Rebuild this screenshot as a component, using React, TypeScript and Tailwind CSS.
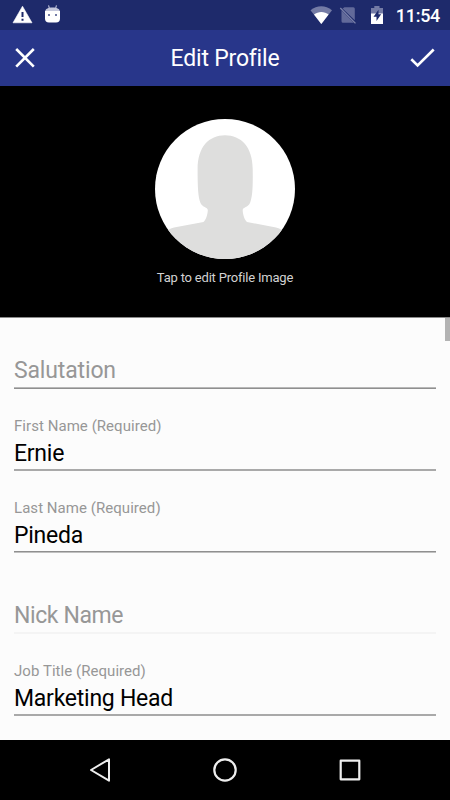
import React from 'react';

interface Field {
  label: string;
  value?: string;
  height: string;
  tracking: string;
  line: string;
}

const fields: Field[] = [
  { label: 'Salutation', height: 'h-[71px]', tracking: 'tracking-[-0.15px]', line: 'border-t-[#b8b8b8] border-b-[#8f8f8f]' },
  { label: 'First Name (Required)', value: 'Ernie', height: 'h-[82px]', tracking: 'tracking-[-0.25px]', line: 'border-t-[#a9a9a9] border-b-[#a9a9a9]' },
  { label: 'Last Name (Required)', value: 'Pineda', height: 'h-[82px]', tracking: 'tracking-[-0.25px]', line: 'border-t-[#8f8f8f] border-b-[#c0c0c0]' },
  { label: 'Nick Name', height: 'h-[81px]', tracking: 'tracking-[-0.4px]', line: 'border-t-[#f4f4f4] border-b-[#f4f4f4]' },
  { label: 'Job Title (Required)', value: 'Marketing Head', height: 'h-[82px]', tracking: 'tracking-[-0.25px]', line: 'border-t-[#a9a9a9] border-b-[#a9a9a9]' },
];

const StatusBar: React.FC = () => (
  <div className="flex h-[30px] shrink-0 items-center justify-between bg-[#1e2a6b] pl-3 pr-[10px] text-white">
    <svg width="50" height="30" viewBox="12 0 50 30">
      <path d="M22.5 6.2 32 22.8H13Z" fill="#fff" stroke="#fff" strokeWidth="0.6" strokeLinejoin="round" />
      <path d="M22.5 12v5M22.5 18.7v2" stroke="#1e2a6b" strokeWidth="2" />
      <path d="M48.5 5.3 49.5 8.6M56.5 5.3 55.5 8.6" stroke="#b3b8d2" strokeWidth="1.2" />
      <path d="M45 12.5C45 9 47.5 7.6 52.5 7.6S60 9 60 12.5Z" fill="#c5c8dc" />
      <path d="M45 11h15v7.5q0 4-4 4h-7q-4 0-4-4Z" fill="#fff" />
      <path d="M48 14h2v2h-2zM55 14h2v2h-2z" fill="#737ba6" />
    </svg>
    <div className="flex items-center">
      <svg width="85" height="30" viewBox="310 0 85 30">
        <path d="M310.5 10.3C317 5 325.5 5 332 10.3L321.3 24Z" fill="#747ba5" />
        <path d="M314 14.5C318 11 324.7 11 328.6 14.5L321.3 24Z" fill="#fff" />
        <path d="m344.5 7.2h8.8q1.5 0 1.5 1.5v11.5L342.5 8.5ZM341.5 10.5l12.3 12.3h-10.8q-1.5 0-1.5-1.5Z" fill="#626a9a" />
        <path d="M340.3 8 355.5 23.4" stroke="#7b82aa" strokeWidth="1.3" />
        <path d="M371 8h3.3V6h5.2v2h3.5v6h-12Z" fill="#747ba5" />
        <path d="M371 13.5h12V24h-12Z" fill="#fff" />
        <path d="M378.5 9.7 373.5 16.7h3v4.3l4.7-6.8h-2.7Z" fill="#1e2a6b" />
      </svg>
      <span className="w-[45px] text-right text-[18px] font-medium leading-[31px] tracking-[-0.3px]">11:54</span>
    </div>
  </div>
);

const Header: React.FC = () => (
  <header className="flex h-14 shrink-0 items-center justify-between bg-[#28368a] px-3 text-white">
    <button aria-label="Close" className="h-7 w-7">
      <svg width="28" height="28" viewBox="0 0 28 28" fill="none" stroke="#fff" strokeWidth="2.6">
        <path d="m4.2 5 17.600 17.600M21.8 5 4.2 22.6" />
      </svg>
    </button>
    <h1 className="pt-0.5 text-[23px] leading-[30px] tracking-[-0.2px]">Edit Profile</h1>
    <button aria-label="Save" className="h-7 w-7">
      <svg width="28" height="28" viewBox="0 0 28 28" fill="none" stroke="#fff" strokeWidth="2.6">
        <path d="m1.3 15.2 6.3 6.2L23.7 5.5" />
      </svg>
    </button>
  </header>
);

const ProfileImage: React.FC = () => (
  <section className="flex h-[232px] shrink-0 flex-col items-center border-b border-[#8a8a8a] bg-black pt-[33px]">
    <svg width="140" height="140" viewBox="155 119 140 140">
      <defs>
        <clipPath id="avatar">
          <circle cx="225" cy="189" r="70" />
        </clipPath>
      </defs>
      <g clipPath="url(#avatar)">
        <path d="M155 119h140v140H155Z" fill="#fff" />
        <path
          d="M225 135.3C209 135.3 197.6 147 197.6 169C197.6 187 198 197 200.5 203C202.5 207.500 207.5 207 207.8 210C207.8 214 206 220 203.5 222L174 227.5Q168 228.5 160 236V262H290V236Q282 228.5 276 227.5L247 222C244.5 220 242.7 214 242.7 210C243 207 248 207.5 250 203C252.5 197 253 187 252.7 169C252.7 147 241 135.3 225 135.3Z"
          fill="#dededd"
        />
      </g>
    </svg>
    <p className="mt-[10px] text-[13px] leading-[18px] tracking-[-0.2px] text-[#d2d2d2]">Tap to edit Profile Image</p>
  </section>
);

const App: React.FC = () => {
  return (
    <div className="flex h-[800px] w-[450px] flex-col overflow-hidden bg-[#fcfcfc] font-['Roboto',sans-serif]">
      <StatusBar />
      <Header />
      <ProfileImage />
      <main className="flex min-h-0 flex-1 items-start justify-between pl-[14px]">
        <form className="w-[422px]">
          {fields.map((field) => (
            <div key={field.label} className={`flex flex-col justify-end ${field.height}`}>
              {field.value ? (
                <>
                  <span className="mb-[6px] text-[15px] leading-[18px] tracking-[0.05px] text-[#979797]">{field.label}</span>
                  <span className={`mb-0.5 text-[23px] leading-[26px] text-black ${field.tracking}`}>{field.value}</span>
                </>
              ) : (
                <span className={`mb-[3px] text-[23px] leading-[26px] text-[#979797] ${field.tracking}`}>{field.label}</span>
              )}
              <div className={`h-0.5 border-y ${field.line}`} />
            </div>
          ))}
        </form>
        <div className="h-[23px] w-[5px] bg-[#b3b3b3]" />
      </main>
      <nav className="flex h-[60px] shrink-0 items-center justify-center gap-[97px] bg-black">
        <svg width="28" height="28" viewBox="0 0 28 28" fill="none" stroke="#eee" strokeWidth="2" strokeLinejoin="round">
          <path d="M23 3.3v21.4L5 14Z" />
        </svg>
        <svg width="28" height="28" viewBox="0 0 28 28" fill="none" stroke="#eee" strokeWidth="2.2">
          <circle cx="14" cy="14" r="10.7" />
        </svg>
        <svg width="28" height="28" viewBox="0 0 28 28" fill="none" stroke="#eee" strokeWidth="2.2" strokeLinejoin="round">
          <path d="M4.7 4.7h18.6v18.6H4.7Z" />
        </svg>
      </nav>
    </div>
  );
};

export default App;
